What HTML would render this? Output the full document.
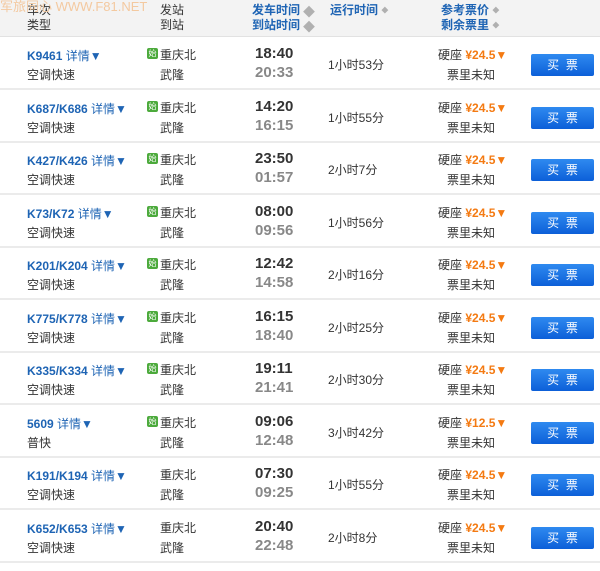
<!DOCTYPE html><html><head><meta charset="utf-8"><style>
*{margin:0;padding:0;box-sizing:border-box}
body{width:600px;height:571px;background:#fff;font-family:"Liberation Sans","Noto Sans CJK SC",sans-serif;font-size:12px;color:#333;position:relative;overflow:hidden}
.hd{position:absolute;left:0;top:0;width:600px;height:37px;background:#f3f3f3;border-bottom:1px solid #e2e2e2}
.hd div{position:absolute;line-height:15px;font-size:12px}
.b{color:#1e64b4;font-weight:bold}
.s{color:#b0b0b0;font-size:7px;vertical-align:middle}
.r{position:absolute;left:0;width:600px;height:53px;border-bottom:2px solid #ebebeb}
.r div{position:absolute;white-space:nowrap}
.tn{left:27px;top:10px;color:#1e64b4;font-weight:bold}
.tn span{font-weight:normal}
.ty{left:27px;top:29px}
.ic{left:147px;top:11px;width:11px;height:11px;background:#4caa3c;border-radius:2px;color:#fff;font-size:8px;line-height:11px;text-align:center}
.st1{left:160px;top:9px}
.st2{left:160px;top:29px}
.t1{left:255px;top:8px;font-size:15px;font-weight:bold;color:#333}
.t2{left:255px;top:27px;font-size:15px;font-weight:bold;color:#888}
.du{left:328px;top:19px}
.p1{left:438px;top:9px}
.p1 b{color:#f47a12}
.p2{left:447px;top:29px}
.btn{left:531px;top:17px;width:63px;height:22px;background:linear-gradient(#2f8af0,#0c5fd8);border-radius:2px;color:#fff;text-align:center;line-height:22px;font-size:12px}
.wm{position:absolute;left:0;top:0;color:#f3c9a0;font-size:13px;line-height:14px}
</style></head><body>
<div class="hd">
<div style="left:27px;top:3px">车次<br>类型</div>
<div style="left:160px;top:3px">发站<br>到站</div>
<div class="b" style="left:252px;top:3px">发车时间<br>到站时间</div>
<div class="s" style="left:303px;top:5px;line-height:15px">◆<br>◆</div>
<div class="b" style="left:330px;top:3px">运行时间 <span class="s">◆</span></div>
<div class="b" style="left:441px;top:3px">参考票价 <span class="s">◆</span><br>剩余票里 <span class="s">◆</span></div>
</div>
<div class="wm">军旅同心 WWW.F81.NET</div>

<div class="r" style="top:37px"><div class="tn">K9461 <span>详情▼</span></div><div class="ty">空调快速</div><div class="ic">始</div><div class="st1">重庆北</div><div class="st2">武隆</div><div class="t1">18:40</div><div class="t2">20:33</div><div class="du">1小时53分</div><div class="p1">硬座 <b>¥24.5▼</b></div><div class="p2">票里未知</div><div class="btn">买&nbsp;&nbsp;票</div></div>
<div class="r" style="top:90px"><div class="tn">K687/K686 <span>详情▼</span></div><div class="ty">空调快速</div><div class="ic">始</div><div class="st1">重庆北</div><div class="st2">武隆</div><div class="t1">14:20</div><div class="t2">16:15</div><div class="du">1小时55分</div><div class="p1">硬座 <b>¥24.5▼</b></div><div class="p2">票里未知</div><div class="btn">买&nbsp;&nbsp;票</div></div>
<div class="r" style="top:142px"><div class="tn">K427/K426 <span>详情▼</span></div><div class="ty">空调快速</div><div class="ic">始</div><div class="st1">重庆北</div><div class="st2">武隆</div><div class="t1">23:50</div><div class="t2">01:57</div><div class="du">2小时7分</div><div class="p1">硬座 <b>¥24.5▼</b></div><div class="p2">票里未知</div><div class="btn">买&nbsp;&nbsp;票</div></div>
<div class="r" style="top:195px"><div class="tn">K73/K72 <span>详情▼</span></div><div class="ty">空调快速</div><div class="ic">始</div><div class="st1">重庆北</div><div class="st2">武隆</div><div class="t1">08:00</div><div class="t2">09:56</div><div class="du">1小时56分</div><div class="p1">硬座 <b>¥24.5▼</b></div><div class="p2">票里未知</div><div class="btn">买&nbsp;&nbsp;票</div></div>
<div class="r" style="top:247px"><div class="tn">K201/K204 <span>详情▼</span></div><div class="ty">空调快速</div><div class="ic">始</div><div class="st1">重庆北</div><div class="st2">武隆</div><div class="t1">12:42</div><div class="t2">14:58</div><div class="du">2小时16分</div><div class="p1">硬座 <b>¥24.5▼</b></div><div class="p2">票里未知</div><div class="btn">买&nbsp;&nbsp;票</div></div>
<div class="r" style="top:300px"><div class="tn">K775/K778 <span>详情▼</span></div><div class="ty">空调快速</div><div class="ic">始</div><div class="st1">重庆北</div><div class="st2">武隆</div><div class="t1">16:15</div><div class="t2">18:40</div><div class="du">2小时25分</div><div class="p1">硬座 <b>¥24.5▼</b></div><div class="p2">票里未知</div><div class="btn">买&nbsp;&nbsp;票</div></div>
<div class="r" style="top:352px"><div class="tn">K335/K334 <span>详情▼</span></div><div class="ty">空调快速</div><div class="ic">始</div><div class="st1">重庆北</div><div class="st2">武隆</div><div class="t1">19:11</div><div class="t2">21:41</div><div class="du">2小时30分</div><div class="p1">硬座 <b>¥24.5▼</b></div><div class="p2">票里未知</div><div class="btn">买&nbsp;&nbsp;票</div></div>
<div class="r" style="top:405px"><div class="tn">5609 <span>详情▼</span></div><div class="ty">普快</div><div class="ic">始</div><div class="st1">重庆北</div><div class="st2">武隆</div><div class="t1">09:06</div><div class="t2">12:48</div><div class="du">3小时42分</div><div class="p1">硬座 <b>¥12.5▼</b></div><div class="p2">票里未知</div><div class="btn">买&nbsp;&nbsp;票</div></div>
<div class="r" style="top:457px"><div class="tn">K191/K194 <span>详情▼</span></div><div class="ty">空调快速</div><div class="st1">重庆北</div><div class="st2">武隆</div><div class="t1">07:30</div><div class="t2">09:25</div><div class="du">1小时55分</div><div class="p1">硬座 <b>¥24.5▼</b></div><div class="p2">票里未知</div><div class="btn">买&nbsp;&nbsp;票</div></div>
<div class="r" style="top:510px"><div class="tn">K652/K653 <span>详情▼</span></div><div class="ty">空调快速</div><div class="st1">重庆北</div><div class="st2">武隆</div><div class="t1">20:40</div><div class="t2">22:48</div><div class="du">2小时8分</div><div class="p1">硬座 <b>¥24.5▼</b></div><div class="p2">票里未知</div><div class="btn">买&nbsp;&nbsp;票</div></div>
</body></html>
